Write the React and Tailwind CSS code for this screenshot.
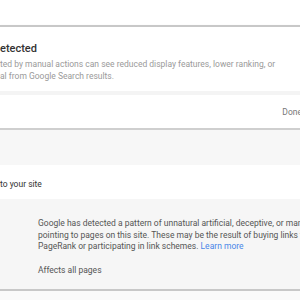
import React from 'react';

const PANEL_LINES = [
  'Google has detected a pattern of unnatural artificial, deceptive, or manipulative links',
  'pointing to pages on this site. These may be the result of buying links that pass',
];

export default function App() {
  return (
    <div className="w-[300px] h-[300px] overflow-hidden bg-white text-[#333]" style={{ fontFamily: 'Roboto, "Liberation Sans", sans-serif' }}>
      <div className="h-[25px] bg-white" />

      {/* Issues card */}
      <div className="border-t-2 border-[#c8c8c8] shadow-[0_1px_2px_rgba(0,0,0,0.15)] bg-white">
        <div className="h-[64px] pt-[15px]">
          <div className="text-[11px] leading-[14px] font-medium text-[#333] whitespace-nowrap">etected</div>
          <div className="mt-[2px] text-[8.5px] leading-[12px] text-[#9a9a9a] whitespace-nowrap">
            <div>ted by manual actions can see reduced display features, lower ranking, or</div>
            <div>al from Google Search results.</div>
          </div>
        </div>
        <div className="h-[4px] bg-[#f4f4f4]" />
        <div className="h-[33px] flex items-start justify-end pt-[12px]">
          <span className="text-[8.5px] leading-[10px] text-[#777] whitespace-nowrap mr-[-2px]">Done</span>
        </div>
        <div className="h-[2px] bg-[#cfcfcf]" />
      </div>

      <div className="h-[35px] bg-[#f7f7f7]" />

      {/* Action card */}
      <div className="bg-white">
        <div className="h-[34px] pt-[14px] text-[8.5px] leading-[10px] text-[#333] whitespace-nowrap">to your site</div>
        <div className="h-[90px] bg-[#f6f6f6] pl-[38px] pt-[19px] text-[8.5px] leading-[11.5px] text-[#555] whitespace-nowrap overflow-hidden">
          {PANEL_LINES.map((line, i) => (
            <div key={i}>{line}</div>
          ))}
          <div>
            PageRank or participating in link schemes. <span className="text-[#4a86e8]">Learn more</span>
          </div>
          <div className="mt-[12px]">Affects all pages</div>
        </div>
        <div className="h-[2px] bg-[#c8c8c8]" />
      </div>
      <div className="h-[10px] bg-[#fafafa]" />
    </div>
  );
}
